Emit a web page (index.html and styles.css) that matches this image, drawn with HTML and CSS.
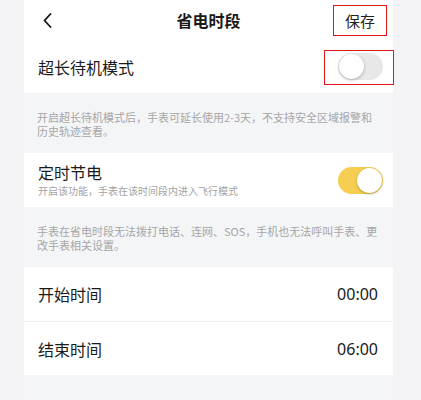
FILE: index.html
```html
<!DOCTYPE html>
<html lang="zh-CN">
<head>
    <meta charset="UTF-8">
    <meta name="viewport" content="width=device-width, initial-scale=1.0">
    <title>省电时段</title>
    <link rel="stylesheet" href="styles.css">
</head>
<body>
    <div class="page">
        <div class="topbar">
            <span class="back">
                <svg width="9" height="15" viewBox="0 0 9 15"><path d="M7.5 1 L1.5 7.5 L7.5 14" fill="none" stroke="#111" stroke-width="1.8" stroke-linecap="round" stroke-linejoin="round"/></svg>
            </span>
            <h1 class="title">省电时段</h1>
            <span class="save">保存</span>
        </div>

        <!-- 超长待机 -->
        <div class="row row-first">
            <span class="label">超长待机模式</span>
            <span class="switch"><span class="knob"></span></span>
            <span class="mark mark-switch"></span>
        </div>
        <p class="note">开启超长待机模式后，手表可延长使用2-3天，不支持安全区域报警和<br>历史轨迹查看。</p>

        <!-- 定时节电 -->
        <div class="row row-timed">
            <div class="label-group">
                <span class="label">定时节电</span>
                <span class="sub">开启该功能，手表在该时间段内进入飞行模式</span>
            </div>
            <span class="switch on"><span class="knob"></span></span>
        </div>
        <p class="note">手表在省电时段无法拨打电话、连网、SOS，手机也无法呼叫手表、更改手表相关设置。</p>

        <div class="group">
            <div class="row time-row">
                <span class="label">开始时间</span>
                <span class="value">00:00</span>
            </div>
            <div class="row time-row">
                <span class="label">结束时间</span>
                <span class="value">06:00</span>
            </div>
        </div>
    </div>
</body>
</html>
```

FILE: styles.css
```css
body {
    margin: 0;
    padding: 0;
    background-color: #f4f4f6;
    font-family: "Noto Sans CJK SC", "Noto Sans", sans-serif;
    color: #1a1a1a;
}
.page {
    width: 369px;
    margin: 0 24px;
    min-height: 400px;
    background-color: #f4f5f7;
}
.topbar {
    display: grid;
    grid-template-columns: 1fr auto 1fr;
    align-items: center;
    height: 40px;
    background-color: #fff;
}
.back {
    display: flex;
    align-items: center;
    padding-left: 19px;
}
.title {
    margin: 0;
    font-size: 16px;
    font-weight: 700;
    line-height: 40px;
}
.save {
    justify-self: end;
    margin-right: 6px;
    width: 52px;
    height: 29px;
    border: 1px solid #e4141b;
    display: flex;
    align-items: center;
    justify-content: center;
    font-size: 15px;
    color: #222;
}
.row {
    position: relative;
    display: flex;
    align-items: center;
    justify-content: space-between;
    background-color: #fff;
    padding: 0 10px 0 14px;
}
.row-first {
    height: 53px;
}
.row-timed {
    height: 54px;
}
.label {
    font-size: 16px;
    color: #1a1a1a;
}
.label-group {
    display: flex;
    flex-direction: column;
    gap: 2px;
}
.label-group .label {
    line-height: 20px;
}
.sub {
    font-size: 10px;
    line-height: 14px;
    color: #a3a3a3;
}
.switch {
    position: relative;
    width: 45px;
    height: 27px;
    border-radius: 14px;
    background-color: #e8e8e8;
}
.switch .knob {
    position: absolute;
    top: 1px;
    left: 1px;
    width: 25px;
    height: 25px;
    border-radius: 50%;
    background-color: #fff;
    box-shadow: 0 1px 3px rgba(0, 0, 0, 0.28);
}
.switch.on {
    background-color: #f6cf52;
}
.switch.on .knob {
    left: 19px;
}
.mark {
    position: absolute;
    border: 1px solid #e4141b;
}
.mark-switch {
    left: 300px;
    top: 10px;
    width: 68px;
    height: 33px;
}
.note {
    margin: 0;
    padding: 17px 6px 15px 13px;
    font-size: 11px;
    line-height: 14px;
    color: #a6a6a6;
}
.group .time-row {
    height: 54px;
    padding-right: 15px;
}
.group .time-row + .time-row {
    border-top: 1px solid #f0f0f0;
    height: 53px;
}
.value {
    font-size: 16px;
    font-family: "Noto Sans", "Liberation Sans", sans-serif;
    color: #1a1a1a;
}
```
